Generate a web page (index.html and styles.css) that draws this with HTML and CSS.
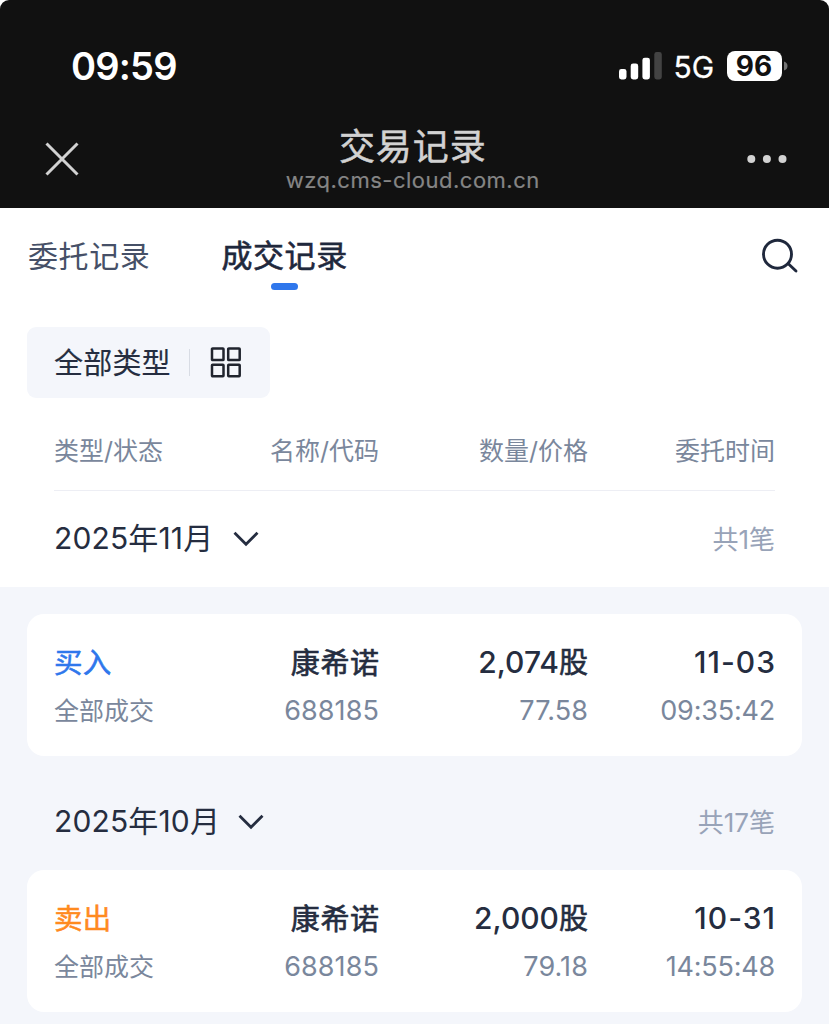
FILE: index.html
```html
<!DOCTYPE html>
<html lang="zh-CN">
<head>
<meta charset="utf-8">
<title>交易记录</title>
<link rel="stylesheet" href="styles.css">
</head>
<body>
<div class="screen">
  <header class="top">
    <div class="status">
      <span class="clock">09:59</span>
      <div class="indicators">
        <svg class="signal" width="44" height="28" viewBox="0 0 44 28"><g fill="#fff"><rect x="0" y="17" width="7.500" height="10.500" rx="2.4"/><rect x="11.7" y="11.5" width="7.500" height="16" rx="2.400"/><rect x="23.400" y="5.700" width="7.500" height="21.800" rx="2.400"/></g><rect x="35.300" y="0" width="7.500" height="27.500" rx="2.400" fill="#434343"/></svg>
        <span class="network">5G</span>
        <span class="battery">96</span>
        <svg class="cap" width="4" height="10" viewBox="0 0 4 10"><path d="M0 0.500Q3.500 1.500 3.500 5T0 9.500Z" fill="#747474"/></svg>
      </div>
    </div>
    <nav class="nav">
      <svg class="close" width="34" height="34" viewBox="0 0 34 34"><path d="M1.500 1.500L32.500 32.500M32.500 1.500L1.500 32.500" stroke="#d2d2d2" stroke-width="3" fill="none"/></svg>
      <div class="heading"><h1 class="title">交易记录</h1><p class="host">wzq.cms-cloud.com.cn</p></div>
      <svg class="more" width="40" height="8" viewBox="0 0 40 8" fill="#d2d2d2"><circle cx="4.300" cy="4" r="4"/><circle cx="19.900" cy="4" r="4"/><circle cx="35.500" cy="4" r="4"/></svg>
    </nav>
  </header>
  <section class="panel">
    <div class="tabs">
      <span class="tab">委托记录</span>
      <span class="tab tab-on">成交记录</span>
      <svg class="search" width="38" height="36" viewBox="0 0 38 36"><g fill="none" stroke="#1f283c" stroke-width="2.900" stroke-linecap="round"><circle cx="16.500" cy="16.200" r="14"/><path d="M27.300 25.700L35 33"/></g></svg>
    </div>
    <div class="filter">
      <span class="filter-name">全部类型</span>
      <i class="rule"></i>
      <svg width="32" height="32" viewBox="0 0 32 32"><g fill="none" stroke="#20242e" stroke-width="2.500"><rect x="2" y="1.500" width="11.500" height="11.500" rx=".6"/><rect x="18.200" y="1.500" width="11.500" height="11.500" rx=".6"/><rect x="2" y="17.700" width="11.500" height="11.500" rx=".6"/><rect x="18.200" y="17.700" width="11.500" height="11.500" rx=".6"/></g></svg>
    </div>
    <div class="row head">
      <span class="cjk">类型/状态</span><span class="cjk">名称/代码</span><span class="cjk">数量/价格</span><span class="cjk">委托时间</span>
    </div>
    <div class="month">
      <span class="date">2025年11月</span>
      <svg width="26" height="16" viewBox="0 0 26 16"><path d="M1.500 1.700L13 13.300L24.500 1.700" fill="none" stroke="#252d40" stroke-width="2.800"/></svg>
      <span class="count">共1笔</span>
    </div>
  </section>
  <main class="list">
    <article class="card">
      <div class="row main"><span class="kind buy">买入</span><span class="name">康希诺</span><span class="qty">2,074<b>股</b></span><span class="day">11-03</span></div>
      <div class="row sub"><span class="cjk">全部成交</span><span class="num">688185</span><span class="num">77.58</span><span class="num time">09:35:42</span></div>
    </article>
    <div class="month month-gap">
      <span class="date">2025年10月</span>
      <svg width="26" height="16" viewBox="0 0 26 16"><path d="M1.500 1.700L13 13.300L24.500 1.700" fill="none" stroke="#252d40" stroke-width="2.800"/></svg>
      <span class="count">共17笔</span>
    </div>
    <article class="card">
      <div class="row main"><span class="kind sell">卖出</span><span class="name">康希诺</span><span class="qty">2,000<b>股</b></span><span class="day">10-31</span></div>
      <div class="row sub"><span class="cjk">全部成交</span><span class="num">688185</span><span class="num">79.18</span><span class="num time">14:55:48</span></div>
    </article>
  </main>
</div>
</body>
</html>
```
FILE: styles.css
```css
* { box-sizing: border-box; margin: 0; padding: 0; }
body { background: #fff; font-family: Inter, "Noto Sans CJK SC", sans-serif; color: #252d40; }
.screen { width: 829px; height: 1024px; overflow: hidden; }
svg { display: block; flex: none; }
span, h1, p { white-space: nowrap; }

.top { height: 208px; margin-right: .5px; background: #111; border-radius: 9px 9px 0 0; }
.status { height: 110px; padding: 22px 41px 0 71px; display: flex; justify-content: space-between; align-items: center; }
.clock { color: #fff; font-size: 38px; font-weight: 600; letter-spacing: -.8px; }
.indicators { display: flex; align-items: center; color: #fff; }
.network { width: 41px; margin-left: 11px; padding-top: 1px; font-size: 30px; font-weight: 400; letter-spacing: 0; -webkit-text-stroke: .3px; }
.battery { margin-left: 12px; width: 55px; height: 30px; border-radius: 8px; background: #fff; color: #111; font-size: 28px; font-weight: 700; line-height: 30px; text-align: center; }
.cap { margin-left: 2px; }
.nav { height: 98px; padding: 0 42px 0 45px; display: flex; justify-content: space-between; align-items: center; }
.heading { width: 300px; text-align: center; }
.title { color: #d2d2d2; font-size: 36px; font-weight: 400; line-height: 42px; letter-spacing: .9px; -webkit-text-stroke: .5px; }
.host { color: #858585; font-size: 22px; font-weight: 400; line-height: 24px; letter-spacing: .5px; -webkit-text-stroke: .2px; }

.panel { background: #fff; height: 379px; }
.tabs { height: 119px; padding: 22px 30px 0 28px; display: flex; align-items: flex-start; }
.tab { font-size: 30px; line-height: 52px; letter-spacing: .6px; color: #465067; }
.tab-on { margin-left: 71px; font-size: 31px; color: #1f283c; -webkit-text-stroke: .6px; display: flex; flex-direction: column; align-items: center; }
.tab-on::after { content: ""; width: 27px; height: 7px; margin-top: 1px; border-radius: 3.500px; background: #2f77ec; }
.search { margin: 8px 0 0 auto; }
.filter { width: 243px; height: 71px; margin-left: 27px; padding-left: 27px; display: flex; align-items: center; border-radius: 9px; background: #f4f6fb; }
.filter-name { width: 135px; padding-bottom: 3px; font-size: 29px; letter-spacing: .2px; -webkit-text-stroke: .15px; }
.rule { width: 1px; height: 27px; margin-right: 20px; background: #d8dce4; }
.row { display: grid; grid-template-columns: 170px 155px 209px 187px; align-items: center; }
.row > :not(:first-child) { text-align: right; }
.head { height: 93px; margin: 0 54px; padding-top: 12px; border-bottom: 1px solid #edeef4; color: #7a879c; }
.cjk { font-size: 25px; padding-bottom: 2px; }
.month { height: 96px; padding: 0 54px; display: flex; align-items: center; }
.date { margin-right: 20px; padding-bottom: 6px; font-size: 30px; letter-spacing: .15px; }
.month-gap .date { margin-right: 18px; }
.count { margin-left: auto; padding-bottom: 3px; font-size: 26px; color: #98a3b8; }

.list { height: 437px; padding: 27px 27px 0; background: #f4f6fb; }
.card { height: 142px; padding: 24px 27px 0; border-radius: 17px; background: #fff; }
.main, .sub { height: 48px; }
.kind { padding-bottom: 3px; font-size: 28.500px; letter-spacing: .3px; -webkit-text-stroke: .5px; }
.buy { color: #2f77ec; }
.sell { color: #ff8a1f; }
.name { padding-bottom: 3px; font-size: 29px; letter-spacing: .6px; margin-right: -.6px; -webkit-text-stroke: .6px; }
.qty, .day { font-size: 30px; font-weight: 500; }
.qty { padding-bottom: 4px; }
.day { letter-spacing: 1px; margin-right: -1px; }
.qty b { font-size: 29px; font-weight: 400; -webkit-text-stroke: .6px; }
.sub { color: #7a879c; }
.num { font-size: 27px; letter-spacing: .1px; }
.time { letter-spacing: -.2px; }
.month-gap { height: 114px; padding: 18px 27px 0; }
```
